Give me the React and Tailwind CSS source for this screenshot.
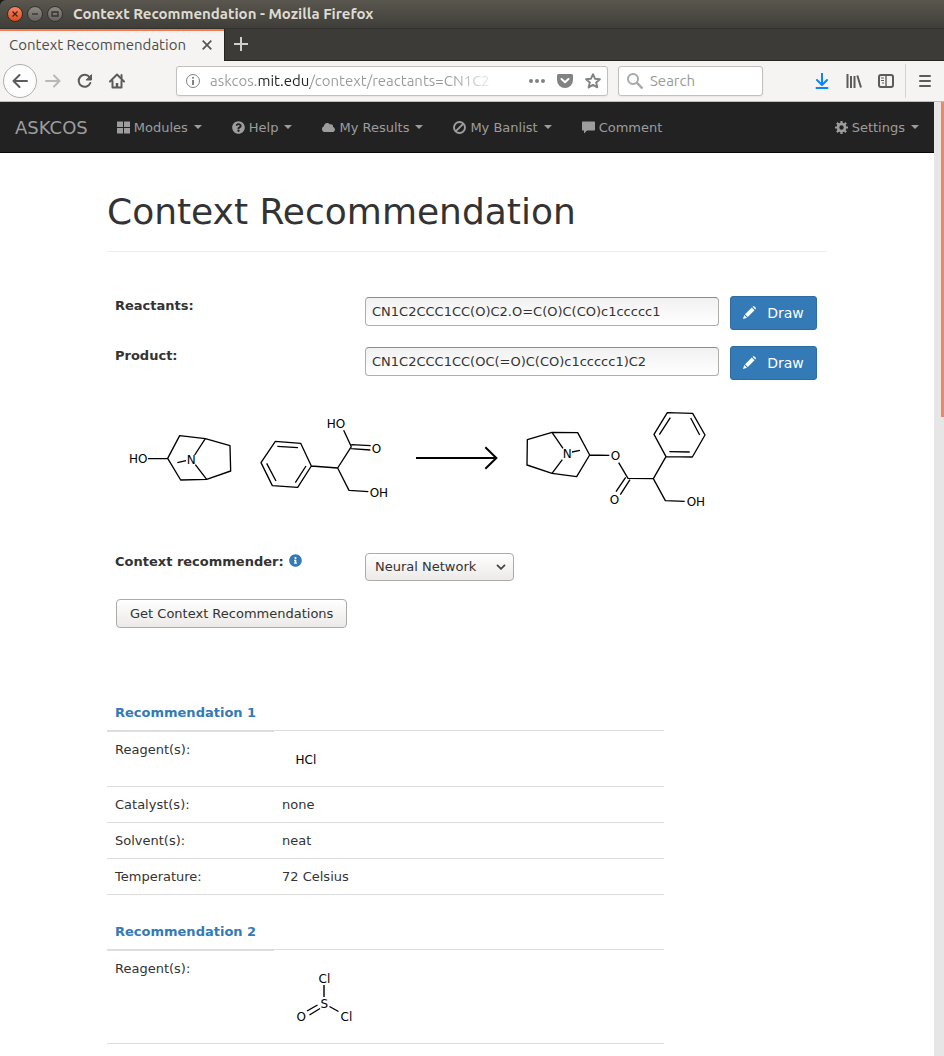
import React from "react";
import { FaQuestionCircle, FaCloud, FaInfoCircle } from "react-icons/fa";

function WindowButton({ label, close, children }) {
  return (
    <button
      aria-label={label}
      className={
        close
          ? "flex size-4 items-center justify-center rounded-full border border-[#3a2a20] bg-linear-to-b from-[#f68561] to-[#dc4c1c] text-[#4a2010]"
          : "flex size-4 items-center justify-center rounded-full border border-[#33322e] bg-linear-to-b from-[#8c8a82] to-[#64625b] text-[#33322e]"
      }
    >
      <svg width="8" height="8" viewBox="0 0 8 8" fill="none" stroke="currentColor" strokeWidth="1.3" className="shrink-0">
        {children}
      </svg>
    </button>
  );
}

function TitleBar() {
  return (
    <header className="flex h-7 shrink-0 items-center gap-1 rounded-tl-md bg-linear-to-b from-[#59574e] to-[#3f3e39] pl-[7px]">
      <WindowButton label="Close window" close>
        <path d="M1.5 1.5l5 5M6.500 1.500l-5 5" />
      </WindowButton>
      <WindowButton label="Minimize">
        <path d="M1 4h6" />
      </WindowButton>
      <WindowButton label="Maximize">
        <path d="M1 2h6v4H1z" />
      </WindowButton>
      <div className="ml-1.5 font-['Ubuntu','Open_Sans',sans-serif] text-[15px] font-bold text-[#dfdbd2]">
        Context Recommendation - Mozilla Firefox
      </div>
    </header>
  );
}

function TabStrip() {
  return (
    <div className="flex h-[33px] shrink-0 border-t border-[#32312d] bg-[#3c3b37]">
      <div className="flex w-[224px] items-center justify-between border-t-2 border-[#f27b52] bg-[#f5f4f2] pr-3 pb-0.5 pl-[9px]">
        <span className="font-['Ubuntu','Noto_Sans',sans-serif] text-[15px] whitespace-nowrap text-[#4c4c4c]">Context Recommendation</span>
        <button aria-label="Close tab">
          <svg width="10" height="10" viewBox="0 0 10 10" fill="none" stroke="#555" strokeWidth="1.7">
            <path d="M.7.7l8.6 8.6M9.3.7L.7 9.3" />
          </svg>
        </button>
      </div>
      <div className="flex flex-1 items-center border-b border-l border-[#252420] pb-0.5 pl-[9px]">
        <button aria-label="New tab">
          <svg width="14" height="14" viewBox="0 0 14 14" fill="none" stroke="#d3cec7" strokeWidth="2">
            <path d="M7 0v14M0 7h14" />
          </svg>
        </button>
      </div>
    </div>
  );
}

function ToolButton({ label, children }) {
  return (
    <button aria-label={label} className="flex size-8 shrink-0 items-center justify-center">
      <svg width="16" height="16" viewBox="0 0 16 16" fill="none" stroke="#5b5b5b" strokeWidth="2" strokeLinecap="round" strokeLinejoin="round">
        {children}
      </svg>
    </button>
  );
}

function Toolbar() {
  return (
    <div className="flex h-[41px] shrink-0 items-center border-b border-[#bfbdb9] bg-[#f5f4f2] px-[3px] font-['Ubuntu','Noto_Sans',sans-serif] text-[15px]">
      <button aria-label="Back" className="flex size-[34px] shrink-0 items-center justify-center rounded-full border border-[#b1afac] bg-[#fdfdfd]">
        <svg width="16" height="16" viewBox="0 0 16 16" fill="none" stroke="#5b5b5b" strokeWidth="2" strokeLinecap="round" strokeLinejoin="round">
          <path d="M15 8H1.500M7.500 2l-6 6 6 6" />
        </svg>
      </button>
      <ToolButton label="Forward">
        <path d="M1 8h13.500M9 2.500l5.500 5.500-5.500 5.500" stroke="#b9b8b6" />
      </ToolButton>
      <ToolButton label="Reload">
        <path d="M13.300 10A6 6 0 1 1 12.500 4.200" />
        <path d="M14.500 2v5h-5z" fill="#5b5b5b" strokeWidth="1" />
      </ToolButton>
      <ToolButton label="Home">
        <path d="M1 8.500L8 1.500l7 7M3.500 8v6.500h9V8" />
        <path d="M8 10v4" strokeWidth="2.500" strokeLinecap="butt" />
        <path d="M12.500 2v3" />
      </ToolButton>
      <div className="ml-[43px] flex h-[30px] min-w-0 flex-1 items-center rounded-[3px] border border-[#c2c0bd] bg-white px-2 shadow-[0_1px_2px_rgba(0,0,0,0.06)]">
        <svg width="16" height="16" viewBox="0 0 16 16" fill="none" stroke="#828282" className="shrink-0">
          <circle cx="8" cy="8" r="6.500" />
          <path d="M8 7v5" strokeWidth="2" />
          <circle cx="8" cy="4.800" r="1.100" fill="#828282" stroke="none" />
        </svg>
        <input
          aria-label="Address"
          readOnly
          value="askcos.mit.edu/context/reactants=CN1C2"
          className="ml-[9px] min-w-0 flex-1 bg-[linear-gradient(to_right,#999_48px,#222_48px,#222_100px,#999_100px,#999_240px,transparent_290px)] bg-clip-text text-transparent outline-none"
        />
        <div className="ml-3 flex shrink-0 items-center gap-3">
          <button aria-label="Page actions">
            <svg width="16" height="16" viewBox="0 0 16 16" fill="#828282">
              <circle cx="2" cy="8" r="2" />
              <circle cx="8" cy="8" r="2" />
              <circle cx="14" cy="8" r="2" />
            </svg>
          </button>
          <button aria-label="Save to Pocket">
            <svg width="16" height="16" viewBox="0 0 16 16">
              <path d="M1.500 1h13A1.500 1.500 0 0 1 16 2.500V7A8 8 0 0 1 0 7V2.500A1.500 1.500 0 0 1 1.500 1z" fill="#828282" />
              <path d="M4.500 6L8 9.300 11.500 6" fill="none" stroke="#fff" strokeWidth="2" strokeLinecap="round" strokeLinejoin="round" />
            </svg>
          </button>
          <button aria-label="Bookmark this page" className="-mr-0.5">
            <svg width="16" height="16" viewBox="0 0 16 16" fill="none" stroke="#828282" strokeWidth="1.900" strokeLinejoin="round">
              <path d="M8 1.200l2 4.500 4.900.5-3.700 3.300 1.100 4.900L8 11.900l-4.300 2.500 1.100-4.900L1.100 6.200 6 5.700z" />
            </svg>
          </button>
        </div>
      </div>
      <label className="mr-[43px] ml-[10px] flex h-[30px] w-[145px] shrink-0 items-center gap-[7px] rounded-[3px] border border-[#c2c0bd] bg-white px-2 shadow-[0_1px_2px_rgba(0,0,0,0.06)]">
        <svg width="16" height="16" viewBox="0 0 16 16" fill="none" stroke="#a8a8a8" strokeWidth="2" className="shrink-0">
          <circle cx="6" cy="6" r="5" />
          <path d="M9.700 9.700L15.500 15.500" strokeWidth="2.400" />
        </svg>
        <input aria-label="Search" placeholder="Search" className="w-full min-w-0 outline-none placeholder:text-[#999]" />
      </label>
      <ToolButton label="Downloads">
        <path d="M8 0.500v11M3 7l5 5 5-5M2.500 15h11" stroke="#0a84ff" />
      </ToolButton>
      <ToolButton label="Library">
        <path d="M1.500 1v14M5 3v12M8.500 3v12M11.300 2.500L15 14.500" strokeLinecap="butt" />
      </ToolButton>
      <ToolButton label="Sidebars">
        <rect x="1" y="2" width="14" height="12" rx="2" />
        <path d="M8 2v12" strokeWidth="1.400" />
        <path d="M3 5h3M3 7.500h3M4 10h2" strokeWidth="1" strokeLinecap="butt" />
      </ToolButton>
      <div className="mx-[3px] h-[34px] w-px shrink-0 bg-[#d5d3d0]" />
      <ToolButton label="Menu">
        <path d="M3 3h10M3 8h10M3 13h10" />
      </ToolButton>
    </div>
  );
}

function Caret() {
  return (
    <svg width="8" height="4" viewBox="0 0 8 4" fill="currentColor" className="ml-0.5">
      <path d="M0 0h8L4 4z" />
    </svg>
  );
}

function GlyphIcon({ children }) {
  return (
    <svg width="13" height="13" viewBox="0 0 13 13" fill="currentColor" className="shrink-0">
      {children}
    </svg>
  );
}

function NavLink({ icon, caret, children }) {
  return (
    <a href="#" className="flex h-[50px] items-center gap-1 px-[15px] whitespace-nowrap">
      {icon}
      {children}
      {caret && <Caret />}
    </a>
  );
}

function NavBar() {
  return (
    <nav className="flex items-center border-b border-[#080808] bg-[#222] text-[13px] text-[#9d9d9d]">
      <a href="#" className="pr-[14px] pl-[15px] text-[18px]">ASKCOS</a>
      <NavLink
        caret
        icon={
          <GlyphIcon>
            <path d="M0 .5h6v5.500H0zM7 .5h6v5.500H7zM0 7h6v5.500H0zM7 7h6v5.500H7z" />
          </GlyphIcon>
        }
      >
        Modules
      </NavLink>
      <NavLink caret icon={<FaQuestionCircle size={13} />}>Help</NavLink>
      <NavLink caret icon={<FaCloud size={13} />}>My Results</NavLink>
      <NavLink
        caret
        icon={
          <GlyphIcon>
            <g fill="none" stroke="currentColor" strokeWidth="1.9">
              <circle cx="6.5" cy="6.5" r="5.500" />
              <path d="M2.600 10.400l7.800-7.800" />
            </g>
          </GlyphIcon>
        }
      >
        My Banlist
      </NavLink>
      <NavLink
        icon={
          <GlyphIcon>
            <path d="M.7.500h11.600a.7.700 0 0 1 .7.700v7.600a.7.700 0 0 1-.7.700H5L2 12.500V9.500H.7A.7.700 0 0 1 0 8.800V1.200A.7.700 0 0 1 .7.500z" />
          </GlyphIcon>
        }
      >
        Comment
      </NavLink>
      <div className="ml-auto">
        <NavLink
          caret
          icon={
            <GlyphIcon>
              <g fill="none" stroke="currentColor">
                <circle cx="6.5" cy="6.5" r="3.500" strokeWidth="2.600" />
                <path
                  d="M6.500 0v2.500M6.500 10.500V13M0 6.500h2.500M10.500 6.500H13M1.900 1.900l1.800 1.800M9.300 9.300l1.800 1.800M1.900 11.100l1.800-1.800M9.300 3.700l1.800-1.800"
                  strokeWidth="2.200"
                />
              </g>
            </GlyphIcon>
          }
        >
          Settings
        </NavLink>
      </div>
    </nav>
  );
}

function DrawButton() {
  return (
    <button className="flex h-[34px] w-[87px] items-center justify-center gap-2.5 rounded-[3px] border border-[#2e6da4] bg-[#337ab7] text-[14px] text-white">
      <svg width="14" height="14" viewBox="0 0 14 14" fill="currentColor">
        <path d="M0 13l1.200-4 2.800 2.800zM2 8.200L8.800 1.500l2.700 2.700L4.800 11zM9.600.8l.4-.4a1 1 0 0 1 1.400 0l1.200 1.200a1 1 0 0 1 0 1.400l-.4.4z" />
      </svg>
      Draw
    </button>
  );
}

const fieldClass =
  "mt-px h-[29px] rounded-[4px] border border-[#b0aeab] border-t-[#8e8c89] bg-linear-to-b from-[#f1f1f1] to-white px-1.5 text-[13px] outline-none";

function ReactionDrawing() {
  return (
    <svg
      viewBox="0 0 2112 468"
      role="img"
      aria-label="Reaction scheme"
      className="h-[156px] w-[704px] max-w-full font-['DejaVu_Sans',sans-serif] text-[36px]"
      fill="none"
      stroke="#000"
      strokeWidth="4"
      strokeLinejoin="round"
    >
      <g transform="translate(-15 36)">
        <path d="M114 176L173 175 209 107 286 116 360 137 362 213 290 238 212 240 173 175M286 116L254 165M290 238L256 194M202 188L228 182" />
        <path d="M604 198L572 130 496 124 453 188 487 257 563 262zM564 143L502 139M470 190L498 243M588 198L556 248M604 198L683 204 724 140M683 204L717 271 775 275M724 140L701 91M724 134L782 137M723 146L781 150" />
        <g fill="#000" stroke="none">
          <text x="57" y="189">HO</text>
          <text x="230" y="191">N</text>
          <text x="650" y="84">HO</text>
          <text x="785" y="159">O</text>
          <text x="779" y="291">OH</text>
        </g>
      </g>
      <g transform="translate(855 36)">
        <path d="M48 174H289M256 142L289 174 256 206" strokeWidth="6" strokeLinejoin="miter" />
        <path d="M456 97L382 119 381 195 456 220 530 230 569 165 533 98zM456 97L489 145M456 220L487 179M516 156L540 151M569 165L628 166M656 188L684 235 760 236M677 232L648 275M690 239L661 284" />
        <path d="M798 170L762 103 802 38 878 40 915 105 877 171zM808 155L869 156M778 104L811 53M872 54L899 105M798 170L760 236 796 302 854 304" />
        <g fill="#000" stroke="none">
          <text x="488" y="174">N</text>
          <text x="632" y="179">O</text>
          <text x="629" y="312">O</text>
          <text x="860" y="318">OH</text>
        </g>
      </g>
    </svg>
  );
}

function HydrogenChloride() {
  return (
    <svg width="80" height="39" viewBox="0 0 80 39" role="img" aria-label="HCl" className="block font-['DejaVu_Sans',sans-serif] text-[12px]">
      <text x="13.500" y="25">HCl</text>
    </svg>
  );
}

function ThionylChloride() {
  return (
    <svg width="90" height="77" viewBox="0 0 90 77" role="img" aria-label="Thionyl chloride" className="block font-['DejaVu_Sans',sans-serif] text-[12px]">
      <text x="36.500" y="25">Cl</text>
      <text x="38.500" y="50">S</text>
      <text x="58.500" y="63">Cl</text>
      <text x="14.500" y="63">O</text>
      <path d="M42 27v12M47.500 48.500l9 5M25 53l10.500-6M27.500 57L38 50.500" stroke="#000" strokeWidth="1.400" fill="none" />
    </svg>
  );
}

function Recommendation({ number, rows }) {
  return (
    <table className="mb-[19px] w-[557px] max-w-full table-fixed border-separate border-spacing-0 text-left leading-[19px]">
      <thead>
        <tr>
          <th className="w-[167px] p-2 font-bold text-[#337ab7]">
            <a href="#">Recommendation {number}</a>
          </th>
          <td />
        </tr>
      </thead>
      <tbody>
        {rows.map(([name, value], i) => (
          <tr key={name} className="align-top">
            <td className={i === 0 ? "border-t-2 border-[#ddd] p-2" : "border-t border-[#ddd] p-2"}>{name}</td>
            <td className="border-t border-[#ddd] p-2">{value}</td>
          </tr>
        ))}
        <tr>
          <td colSpan={2} className="h-px bg-[#ddd] p-0" />
        </tr>
      </tbody>
    </table>
  );
}

function Page() {
  return (
    <div className="min-w-0 flex-1 overflow-hidden bg-white font-['DejaVu_Sans',sans-serif] text-[13px] leading-[19px] text-[#333]">
      <NavBar />
      <main className="mx-auto mt-[39px] max-w-[720px]">
        <h1 className="mb-9 border-b border-[#eee] pb-[19px] text-[36px] leading-[40px]">Context Recommendation</h1>
        <form className="px-2 pt-2" onSubmit={(e) => e.preventDefault()}>
          <div className="grid grid-cols-[239px_354px_auto] items-start justify-start gap-x-[11px] gap-y-4">
            <label htmlFor="reactants" className="font-bold">Reactants:</label>
            <input id="reactants" defaultValue="CN1C2CCC1CC(O)C2.O=C(O)C(CO)c1ccccc1" className={fieldClass} />
            <DrawButton />
            <label htmlFor="product" className="font-bold">Product:</label>
            <input id="product" defaultValue="CN1C2CCC1CC(OC(=O)C(CO)c1ccccc1)C2" className={fieldClass} />
            <DrawButton />
          </div>
          <div className="py-2">
            <ReactionDrawing />
          </div>
          <div className="grid grid-cols-[239px_auto] items-start justify-start gap-x-[11px]">
            <label htmlFor="recommender" className="flex items-center gap-[5px] font-bold">
              Context recommender: <FaInfoCircle size={13} className="mb-0.5 text-[#337ab7]" />
            </label>
            <div className="relative mt-px">
              <select
                id="recommender"
                className="h-7 w-[149px] appearance-none rounded-[4px] border border-[#adaba8] bg-linear-to-b from-white to-[#ebeae8] pr-7 pb-0.5 pl-[9px] text-[13px]"
              >
                <option>Neural Network</option>
                <option>Nearest Neighbor</option>
              </select>
              <svg width="10" height="6" viewBox="0 0 10 6" fill="none" stroke="#444" strokeWidth="1.800" className="pointer-events-none absolute top-[11px] right-2">
                <path d="M1 .8l4 4 4-4" />
              </svg>
            </div>
          </div>
          <button className="mt-[18px] ml-px h-[29px] rounded-[4px] border border-[#adaba8] bg-linear-to-b from-white to-[#ebeae8] px-[13px] text-[13px]">
            Get Context Recommendations
          </button>
        </form>
        <section className="mt-[67px]">
          <Recommendation
            number={1}
            rows={[
              ["Reagent(s):", <HydrogenChloride />],
              ["Catalyst(s):", "none"],
              ["Solvent(s):", "neat"],
              ["Temperature:", "72 Celsius"],
            ]}
          />
          <Recommendation number={2} rows={[["Reagent(s):", <ThionylChloride />]]} />
        </section>
      </main>
    </div>
  );
}

export default function App() {
  return (
    <div className="flex h-screen flex-col overflow-hidden bg-[#1d1c1a]">
      <TitleBar />
      <TabStrip />
      <Toolbar />
      <div className="flex min-h-0 flex-1">
        <Page />
        <div className="flex w-[10px] shrink-0 justify-end bg-[#e6e6e6]">
          <div className="h-[33%] w-[3px] bg-[#f08763]" />
        </div>
      </div>
    </div>
  );
}
